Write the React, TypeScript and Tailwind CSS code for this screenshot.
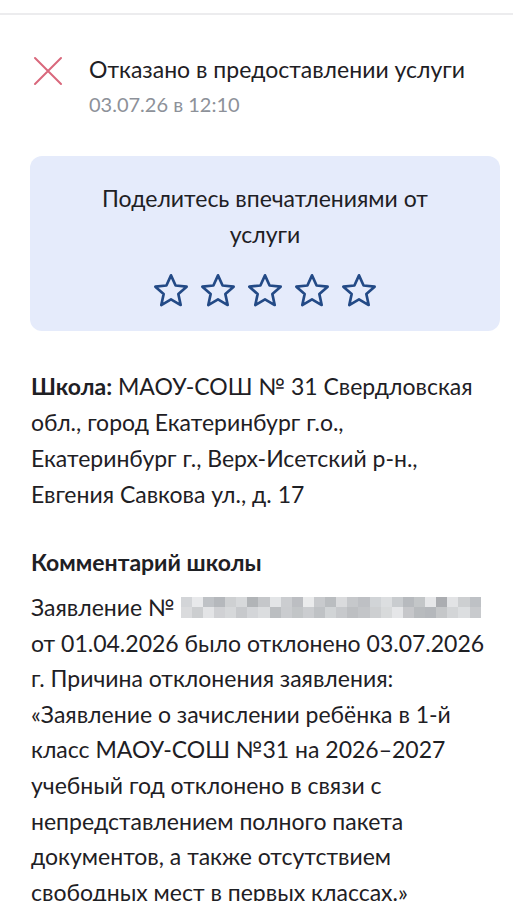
import React from "react";

const pixelRowA = [
  "bg-[#cfd1d4]", "bg-[#e6e7e9]", "bg-[#b9bcc0]", "bg-[#aeb1b5]", "bg-[#c9cbce]", "bg-[#d3d5d8]",
  "bg-[#a9acb0]", "bg-[#bfc2c5]", "bg-[#e1e3e5]", "bg-[#c6c8cb]", "bg-[#b5b8bc]", "bg-[#e8e9eb]",
  "bg-[#c3c5c8]", "bg-[#b3b6ba]", "bg-[#d6d8da]", "bg-[#c0c3c6]", "bg-[#b7babe]", "bg-[#cdd0d3]",
  "bg-[#d9dbdd]", "bg-[#c4c7ca]", "bg-[#b0b3b7]", "bg-[#bdc0c3]", "bg-[#e4e5e7]", "bg-[#a2a5a9]",
  "bg-[#dfe1e3]", "bg-[#c8cacd]", "bg-[#b8bbbf]",
];
const pixelRowB = [
  "bg-[#d6d8da]", "bg-[#c7c9cc]", "bg-[#e0e2e4]", "bg-[#cbcdd0]", "bg-[#d2d4d6]", "bg-[#c1c4c7]",
  "bg-[#cfd1d4]", "bg-[#d8dadc]", "bg-[#b4b7bb]", "bg-[#c5c7ca]", "bg-[#bcbfc2]", "bg-[#c6c8cb]",
  "bg-[#b9bcbf]", "bg-[#cdd0d2]", "bg-[#c2c4c7]", "bg-[#b6b9bc]", "bg-[#bdbfc3]", "bg-[#c8cacd]",
  "bg-[#d4d6d8]", "bg-[#e3e4e6]", "bg-[#c0c2c5]", "bg-[#b1b4b8]", "bg-[#aeb1b5]", "bg-[#bfc1c4]",
  "bg-[#cfd1d3]", "bg-[#d9dbdd]", "bg-[#c3c5c8]",
];

function Star() {
  return (
    <svg width="42" height="40" viewBox="0 0 24 24" fill="none">
      <path
        d="M12 2.6l2.75 6.1 6.65.7-4.98 4.47 1.4 6.55L12 17.08 6.18 20.42l1.4-6.55L2.6 9.4l6.65-.7L12 2.6z"
        stroke="#234a86"
        strokeWidth="1.6"
        strokeLinejoin="round"
      />
    </svg>
  );
}

function Redacted() {
  return (
    <span className="inline-flex flex-col align-middle ml-[6px] w-[300px] h-[21px] opacity-90 -translate-y-[3px]">
      <span className="flex h-[10px]">
        {pixelRowA.map((c, i) => (
          <span key={i} className={`flex-1 ${c}`} />
        ))}
      </span>
      <span className="flex h-[11px]">
        {pixelRowB.map((c, i) => (
          <span key={i} className={`flex-1 ${c}`} />
        ))}
      </span>
    </span>
  );
}

export default function App() {
  return (
    <div className="min-h-screen bg-white font-['Lato','Noto_Sans',sans-serif] text-[#1e2024]">
      <div className="h-[13px]" />
      <div className="h-[2px] bg-[#ececee]" />

      <div className="flex items-start gap-[25px] px-[32px] pt-[39px]">
        <svg width="32" height="32" viewBox="0 0 32 32" className="shrink-0 mt-[1px]">
          <path d="M3 3L29 29M29 3L3 29" stroke="#d9687c" strokeWidth="2" strokeLinecap="round" />
        </svg>
        <div className="flex flex-col whitespace-nowrap">
          <div className="text-[23px] leading-[30px]">Отказано в предоставлении услуги</div>
          <div className="text-[20px] leading-[28px] text-[#8d9199] mt-[6px]">03.07.26 в 12:10</div>
        </div>
      </div>

      <div className="ml-[30px] mr-[13px] mt-[38px] rounded-[12px] bg-[#e5ebfb] px-[24px] pt-[24px] pb-[20px] flex flex-col items-center">
        <div className="text-[23px] leading-[36px] text-center whitespace-nowrap">
          Поделитесь впечатлениями от
          <br />
          услуги
        </div>
        <div className="flex gap-[5px] mt-[19px]">
          <Star />
          <Star />
          <Star />
          <Star />
          <Star />
        </div>
      </div>

      <div className="px-[31px] pt-[37px] text-[23px] leading-[36px] whitespace-nowrap">
        <span className="font-bold">Школа:</span> МАОУ-СОШ № 31 Свердловская
        <br />
        обл., город Екатеринбург г.о.,
        <br />
        Екатеринбург г., Верх-Исетский р-н.,
        <br />
        Евгения Савкова ул., д. 17
      </div>

      <div className="px-[31px] pt-[32px] text-[23px] leading-[36px] font-bold">Комментарий школы</div>

      <div className="px-[31px] pt-[10px] text-[23px] leading-[35.6px] whitespace-nowrap">
        Заявление №<Redacted />
        <br />
        от 01.04.2026 было отклонено 03.07.2026
        <br />
        г. Причина отклонения заявления:
        <br />
        «Заявление о зачислении ребёнка в 1-й
        <br />
        класс МАОУ-СОШ №31 на 2026–2027
        <br />
        учебный год отклонено в связи с
        <br />
        непредставлением полного пакета
        <br />
        документов, а также отсутствием
        <br />
        свободных мест в первых классах.»
      </div>
    </div>
  );
}
